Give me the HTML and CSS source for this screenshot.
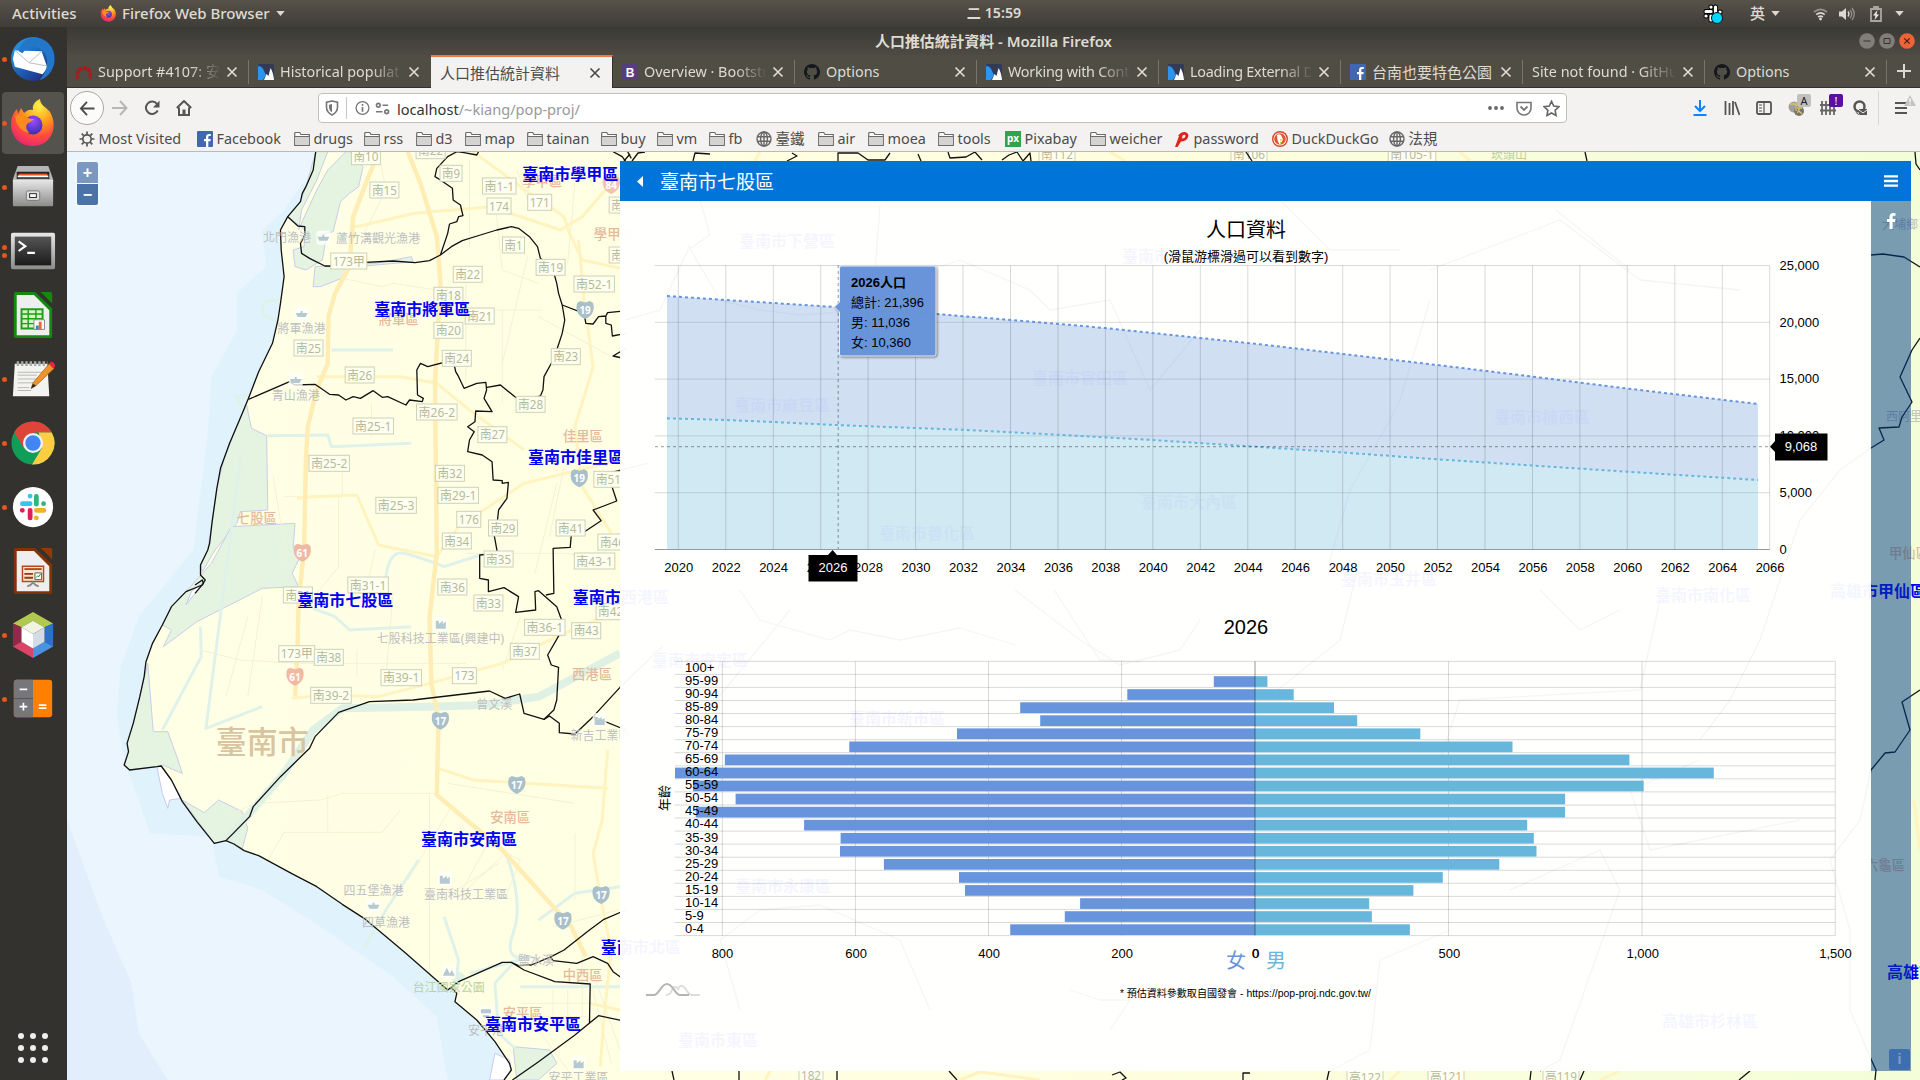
FILE: index.html
```html
<!DOCTYPE html>
<html lang="zh-Hant">
<head>
<meta charset="utf-8">
<title>人口推估統計資料</title>
<link rel="stylesheet" href="styles.css">
</head>
<body>
<svg class="defs" aria-hidden="true">
  <defs>
    <radialGradient id="ffBody" cx=".65" cy=".15" r="1"><stop offset="0" stop-color="#fff14a"/><stop offset=".35" stop-color="#ffa01c"/><stop offset=".65" stop-color="#ff4a3e"/><stop offset="1" stop-color="#e0158c"/></radialGradient>
    <radialGradient id="ffCore" cx=".5" cy=".3" r=".7"><stop offset="0" stop-color="#9a4cff"/><stop offset="1" stop-color="#3b2fa8"/></radialGradient>
    <linearGradient id="tbBody" x1="0" x2="1" y2="1"><stop offset="0" stop-color="#2aa5e8"/><stop offset=".5" stop-color="#1d60b8"/><stop offset="1" stop-color="#231a63"/></linearGradient>
    <linearGradient id="metal" x2="0" y2="1"><stop offset="0" stop-color="#e8e8e8"/><stop offset="1" stop-color="#8c8c8c"/></linearGradient>
    <linearGradient id="screen" x2="0" y2="1"><stop offset="0" stop-color="#555"/><stop offset="1" stop-color="#1b1b1b"/></linearGradient>
  </defs>
  <symbol id="firefox" viewBox="0 0 46 48"><path d="M23 47C10 47 1 38 1 25c0-7 3-12 6-15l1 5 3-6 3 5c3-3 6-4 9-3-1-5 2-9 7-11 0 6 6 8 10 13 9 15 1 34-17 34z" fill="url(#ffBody)"/><circle cx="23" cy="26" r="9.5" fill="url(#ffCore)"/><path d="M5 17c5-1 9-2 13 2 2 1 4 1 6 1-2 3-5 3-7 5-2 3 0 7 3 9-8-1-14-7-15-17z" fill="#ff8a1e"/></symbol>
  <symbol id="close" viewBox="0 0 12 12"><path d="M1.5 1.5l9 9M10.500 1.500l-9 9" stroke="currentColor" stroke-width="1.700" fill="none"/></symbol>
  <symbol id="folder" viewBox="0 0 16 16"><path d="M.7 14.300V2.500q0-1 1-1h4l1.200 2h8.400v10.800z" fill="#fff" stroke="#6a6a6a" stroke-width="1.200"/><path d="M1.300 5.800h13.400v7.900H1.300z" fill="#d4d3d1"/><path d="M.7 5.500h14.600" stroke="#6a6a6a"/></symbol>
  <symbol id="globe" viewBox="0 0 16 16"><g fill="none" stroke="#666" stroke-width="1.400"><circle cx="8" cy="8" r="7"/><ellipse cx="8" cy="8" rx="3.400" ry="7"/><path d="M1 5.700h14M1 10.300h14M8 1v14"/></g></symbol>
  <symbol id="fb" viewBox="0 0 16 16"><rect width="16" height="16" rx="1" fill="#4267b2"/><path d="M9 16v-5.700H7V8h2V6.200C9 4 10.300 3 12 3h1.800v2h-1.300c-1 0-1.200.5-1.200 1.300V8h2.400l-.3 2.300h-2.100V16z" fill="#fff"/></symbol>
  <symbol id="github" viewBox="0 0 16 16"><path fill="#15181b" d="M8 0C3.580 0 0 3.580 0 8c0 3.540 2.290 6.530 5.470 7.590.4.070.55-.17.55-.38v-1.490c-2.010.37-2.530-.49-2.690-.94-.09-.23-.48-.94-.82-1.130-.28-.15-.68-.52-.01-.53.63-.01 1.080.58 1.230.82.72 1.210 1.870.87 2.330.66.07-.52.28-.87.51-1.070-1.780-.2-3.640-.89-3.640-3.950 0-.87.31-1.590.82-2.150-.08-.2-.36-1.020.08-2.120 0 0 .67-.21 2.200.82a7.400 7.400 0 0 1 4 0c1.530-1.040 2.200-.82 2.200-.82.44 1.100.16 1.920.08 2.120.51.560.82 1.270.82 2.150 0 3.070-1.870 3.750-3.650 3.950.29.25.54.73.54 1.480v2.200c0 .21.15.46.55.38A8 8 0 0 0 8 0z"/></symbol>
  <symbol id="arcgis" viewBox="0 0 16 16"><rect width="16" height="16" rx="1" fill="#343a55"/><path d="M0 2c5 0 6 5 8 9l-3 5H0z" fill="#2a94ee"/><path d="M6 16l2.500-6 2 2 2-8c2 3 3 7 3.500 12z" fill="#fff"/></symbol>
  <symbol id="redmine" viewBox="0 0 16 16"><path d="M1.500 14.500C.8 7 4 4 8 4s7.200 3 6.500 10.500" fill="none" stroke="#b8121b" stroke-width="3.600" stroke-dasharray="3.600 .8"/></symbol>
  <symbol id="slack" viewBox="0 0 28 28"><g stroke-width="5" stroke-linecap="round"><path d="M11 2.600h-.1M3 10.500h8" stroke="#36c5f0"/><path d="M17.500 3v8M25 10.500h.1" stroke="#2eb67d"/><path d="M17.500 25.500v-.1M17.500 17.500h8" stroke="#ecb22e"/><path d="M2.800 17.500h.1M11 17.500v8" stroke="#e01e5a"/></g></symbol>
  <symbol id="caret" viewBox="0 0 10 6"><path d="M0 0h10L5 6z" fill="#dcd9d3"/></symbol>
</svg>

<header class="topbar">
  <div class="topbar-left">
    <span>Activities</span>
    <svg class="ff-mini"><use href="#firefox"/></svg><span>Firefox Web Browser</span><svg class="caret"><use href="#caret"/></svg>
  </div>
  <div class="clock">二 15:59</div>
  <div class="topbar-right">
    <svg class="tray-slack" viewBox="0 0 20 20"><g stroke="#000" stroke-width="5" stroke-linecap="round"><path d="M8 3v.1M3 7.500h5M12.500 3v5M17 8v.1M3 12h.1M8 12v4"/></g><g stroke="#fff" stroke-width="3.200" stroke-linecap="round"><path d="M8 3v.1M3 7.500h5M12.500 3v5M17 8v.1M3 12h.1M8 12v4"/></g><circle cx="14" cy="14" r="5.500" fill="#00d5ff" stroke="#111"/></svg>
    <span class="ime">英</span><svg class="caret caret-ime"><use href="#caret"/></svg>
    <svg class="tray-wifi" viewBox="0 0 16 14"><g fill="none" stroke="#dcd9d3" stroke-width="1.800"><path d="M1 5q7-6 14 0" opacity=".5"/><path d="M3.500 7.700q4.500-4 9 0M5.500 10.200q2.500-2 5 0"/></g><circle cx="8" cy="12.300" r="1.500" fill="#dcd9d3"/></svg>
    <svg class="tray-vol" viewBox="0 0 16 14"><path d="M0 4.500h3L7 1v12L3 9.500H0z" fill="#dcd9d3"/><g fill="none" stroke="#dcd9d3" stroke-width="1.300"><path d="M9 4.500q2 2.500 0 5"/><path d="M11 2.800q3.500 4.200 0 8.400M13 1q4.500 6 0 12" opacity=".5"/></g></svg>
    <svg class="tray-bat" viewBox="0 0 12 16"><path d="M1 3h10v12H1zM4 1h4v2H4z" fill="none" stroke="#a9a69f" stroke-width="1.800"/><path d="M7.500 4L3 9.500h2.500L4.500 14 9 8.500H6.500z" fill="#eee"/></svg>
    <svg class="caret"><use href="#caret"/></svg>
  </div>
</header>

<div class="desktop">
  <nav class="dock">
    <div class="dock-item run"><svg viewBox="0 0 48 48"><circle cx="24" cy="24" r="23" fill="url(#tbBody)"/><path d="M5 15l28 1 6 17-5 7-29-8-2-8z" fill="#fff"/><path d="M5 15l15 13 13-12M20 28l18 3" fill="none" stroke="#bbb"/><path d="M9 16C12 5 20 0 30 2c12 3 18 14 16 27-2 9-8 15-15 17 8-9 10-20 5-28C29 9 20 8 13 18z" fill="#2277c8"/></svg></div>
    <div class="dock-item run active"><svg><use href="#firefox"/></svg></div>
    <div class="dock-item run"><svg viewBox="0 0 48 48"><path d="M8 2h32l5 14H3z" fill="#b5b5b5"/><path d="M7 8h34v9H7z" fill="#222"/><path d="M9 10h30v3H9z" fill="#e95420"/><path d="M8 12h32v2H8z" fill="#fff"/><path d="M8 14h32v3H8z" fill="#444"/><rect x="3" y="16" width="42" height="28" rx="1" fill="url(#metal)"/><rect x="17" y="28" width="14" height="10" rx="2" fill="#ddd" stroke="#777"/><path d="M20 33h8" stroke="#222" stroke-width="5"/><path d="M21 33h6" stroke="#fff" stroke-width="3"/></svg></div>
    <div class="dock-item run two"><svg viewBox="0 0 48 48"><rect x="1" y="5" width="46" height="38" rx="2" fill="url(#metal)"/><rect x="5" y="9" width="38" height="30" fill="url(#screen)"/><path d="M9 14l7 5-7 5M18 26h8" fill="none" stroke="#fff" stroke-width="2.200"/></svg></div>
    <div class="dock-item"><svg viewBox="0 0 48 48"><path d="M4 2q0-2 2-2h20l18 17v29q0 2-2 2H6q-2 0-2-2z" fill="#128a10"/><path d="M32 0h10q2 0 2 2v10z" fill="#128a10"/><path d="M7 3h18l16 16v26H7z" fill="#eee"/><path d="M12 18h22v20H12z" fill="#d8f5c8" stroke="#1aa014" stroke-width="2"/><path d="M12 23h22M12 28h22M12 33h22M19 18v20M27 18v20" stroke="#1aa014" stroke-width="1.500"/><path d="M25 29h11v10H25z" fill="#fff" stroke="#888"/><path d="M27 39v-4h3v4z" fill="#28c"/><path d="M30 39v-8h3v8z" fill="#e63"/></svg></div>
    <div class="dock-item run"><svg viewBox="0 0 48 48"><path d="M5 8h34l2 34H3z" fill="#f3f3ef"/><path d="M7 8h32" stroke="#aaa" stroke-width="5" stroke-dasharray="2.500 2"/><path d="M8 17h26M8 20h20M8 24h24M8 28h18M8 33h12M8 36h14" stroke="#b5b5b5"/><path d="M41 8l5 5-19 18-5 3 2-6z" fill="#f0932b" stroke="#a0591a" stroke-width=".7"/><path d="M41 8l2-2q4 0 4 5l-2 2z" fill="#e24"/><path d="M22 34l2-5 3 2z" fill="#222"/></svg></div>
    <div class="dock-item run"><svg viewBox="0 0 48 48"><circle cx="24" cy="24" r="22.500" fill="#109d58"/><path d="M4.500 12.800A22.500 22.500 0 0 1 43.500 13H24l-9.500 16.500z" fill="#de4437"/><path d="M43.500 13A22.500 22.500 0 0 1 23 46.500L33.500 29 30 13z" fill="#ffcd42"/><circle cx="24" cy="24" r="10.500" fill="#f1f1f1"/><circle cx="24" cy="24" r="8" fill="#4285f4"/></svg></div>
    <div class="dock-item run"><svg viewBox="0 0 48 48"><circle cx="24" cy="24" r="21" fill="#fff"/><use href="#slack" x="10" y="10" width="28" height="28"/></svg></div>
    <div class="dock-item"><svg viewBox="0 0 48 48"><path d="M4 2q0-2 2-2h20l18 17v29q0 2-2 2H6q-2 0-2-2z" fill="#843106"/><path d="M32 0h10q2 0 2 2v10z" fill="#943a08"/><path d="M7 3h18l16 16v26H7z" fill="#eee"/><path d="M13 19h22v16H13z" fill="#fbe5d4" stroke="#b5491c" stroke-width="1.500"/><path d="M15 22h18" stroke="#b5491c" stroke-width="2"/><path d="M15 27h9M15 31h9" stroke="#943a08" stroke-width="2"/><path d="M26 26h7v7h-7z" fill="#fff" stroke="#555"/><path d="M27 31l2-2 1 1 2-3" stroke="#184" fill="none"/><path d="M18 40q4-1 6-4 2 3 6 4" stroke="#888" stroke-width="2" fill="none"/></svg></div>
    <div class="dock-item run"><svg viewBox="0 0 48 48"><path d="M24 0l21 12-9 4-12-7-12 7-9-4z" fill="#b1c94f"/><path d="M3 12l9 4v15l-9 5z" fill="#93294a"/><path d="M45 12l-9 4v15l9 5z" fill="#2f70c4"/><path d="M3 36l9-5 12 7v10z" fill="#dc4467"/><path d="M45 36l-9-5-12 7v10z" fill="#4a93e0"/><path d="M24 9l12 7-12 7-12-7z" fill="#f0f3e0"/><path d="M12 16l12 7v15l-12-7z" fill="#fff"/><path d="M36 16l-12 7v15l12-7z" fill="#d3dbe5"/></svg></div>
    <div class="dock-item run"><svg viewBox="0 0 48 48"><rect x="4" y="4" width="40" height="39" rx="3" fill="#ff7f00"/><path d="M7 4h17v39H7q-3 0-3-3V7q0-3 3-3z" fill="#77767b"/><path d="M4 23.500h20" stroke="#55545a"/><path d="M10 14h8M10 32h8M14 28v8M30 30.500h8M30 33.500h8" stroke="#fff" stroke-width="1.800"/></svg></div>
    <div class="apps"><i></i><i></i><i></i><i></i><i></i><i></i><i></i><i></i><i></i></div>
  </nav>

  <main class="window">
    <div class="titlebar"><span class="win-title">人口推估統計資料 - Mozilla Firefox</span>
      <div class="win-buttons">
        <svg viewBox="0 0 16 16"><circle cx="8" cy="8" r="7.800" fill="#807e77"/><path d="M4.500 8h7" stroke="#33322e"/></svg>
        <svg viewBox="0 0 16 16"><circle cx="8" cy="8" r="7.800" fill="#807e77"/><path d="M5 5.500h6v5H5z" fill="none" stroke="#33322e"/></svg>
        <svg viewBox="0 0 16 16"><circle cx="8" cy="8" r="7.800" fill="#ee6338"/><path d="M5.300 5.300l5.400 5.400M10.700 5.300l-5.400 5.400" stroke="#43200f" stroke-width="1.200"/></svg>
      </div>
    </div>
    <div class="tabs">
      <div class="tab"><svg class="fav"><use href="#redmine"/></svg><span class="fade">Support #4107: 安</span><svg class="x"><use href="#close"/></svg></div>
      <div class="tab"><svg class="fav"><use href="#arcgis"/></svg><span class="fade">Historical populat</span><svg class="x"><use href="#close"/></svg></div>
      <div class="tab current"><span class="cjk">人口推估統計資料</span><svg class="x"><use href="#close"/></svg></div>
      <div class="tab"><svg class="fav" viewBox="0 0 16 16"><rect width="16" height="16" rx="2" fill="#563d7c"/><text x="8" y="12.500" text-anchor="middle" class="fav-b">B</text></svg><span class="fade">Overview · Bootstr</span><svg class="x"><use href="#close"/></svg></div>
      <div class="tab"><svg class="fav"><use href="#github"/></svg><span>Options</span><svg class="x"><use href="#close"/></svg></div>
      <div class="tab"><svg class="fav"><use href="#arcgis"/></svg><span class="fade tight">Working with Cont</span><svg class="x"><use href="#close"/></svg></div>
      <div class="tab"><svg class="fav"><use href="#arcgis"/></svg><span class="fade tight">Loading External D</span><svg class="x"><use href="#close"/></svg></div>
      <div class="tab"><svg class="fav"><use href="#fb"/></svg><span class="cjk">台南也要特色公園</span><svg class="x"><use href="#close"/></svg></div>
      <div class="tab"><span class="fade">Site not found · GitHu</span><svg class="x"><use href="#close"/></svg></div>
      <div class="tab"><svg class="fav"><use href="#github"/></svg><span>Options</span><svg class="x"><use href="#close"/></svg></div>
      <svg class="newtab" viewBox="0 0 14 14"><path d="M7 0v14M0 7h14" stroke="#dcd9d3" stroke-width="2"/></svg>
    </div>
    <div class="navbar">
      <div class="nav-left">
        <div class="back"><svg viewBox="0 0 16 16"><path d="M8 1L1.500 8 8 15M1.500 8H16" fill="none" stroke="#4c4c4c" stroke-width="2"/></svg></div>
        <svg viewBox="0 0 16 16"><path d="M8 1l6.500 7L8 15M14.500 8H0" fill="none" stroke="#b7b6b4" stroke-width="2"/></svg>
        <svg viewBox="0 0 16 16"><path d="M13.700 10.500A6.200 6.200 0 1 1 13 4" fill="none" stroke="#555" stroke-width="2"/><path d="M15.500.5v7H9z" fill="#555"/></svg>
        <svg viewBox="0 0 16 16"><path d="M.8 8L8 1l7.200 7M3 7.500V15h10V7.500" fill="none" stroke="#555" stroke-width="2"/><path d="M6.500 9.500h3V15h-3z" fill="#555"/></svg>
      </div>
      <div class="urlbar">
        <svg class="shield" viewBox="0 0 14 16"><path d="M7 1l5.500 1.200v5q0 5-5.500 7.800-5.500-2.800-5.500-7.800v-5z" fill="none" stroke="#777" stroke-width="1.600"/><path d="M7 4l-3 .7V8q.5 3 3 4.300z" fill="#777"/></svg>
        <svg class="ident" viewBox="0 0 16 16"><circle cx="8" cy="8" r="6.800" fill="none" stroke="#777" stroke-width="1.400"/><path d="M8 7v5M8 3.800v1.800" stroke="#777" stroke-width="1.800"/></svg>
        <svg class="perm" viewBox="0 0 16 14"><g fill="none" stroke="#777" stroke-width="1.800"><circle cx="3.500" cy="3.500" r="2"/><circle cx="12.500" cy="10.500" r="2"/><path d="M8 3.500h6M1 10.500h7"/></g></svg>
        <span class="url">localhost<em>/~kiang/pop-proj/</em></span>
        <svg class="dots" viewBox="0 0 16 4"><g fill="#666"><circle cx="2" cy="2" r="1.900"/><circle cx="8" cy="2" r="1.900"/><circle cx="14" cy="2" r="1.900"/></g></svg>
        <svg class="pocket" viewBox="0 0 16 15"><path d="M1 1.500h14V7A7 7 0 0 1 1 7z" fill="none" stroke="#777" stroke-width="1.600"/><path d="M4.500 5.500L8 9l3.500-3.500" fill="none" stroke="#777" stroke-width="1.800"/></svg>
        <svg class="star" viewBox="0 0 16 16"><path d="M8 1.200l2.100 4.500 4.900.6-3.600 3.400.9 4.900L8 12.200l-4.300 2.400.9-4.900L1 6.300l4.900-.6z" fill="none" stroke="#666" stroke-width="1.500"/></svg>
      </div>
      <div class="nav-right">
        <svg viewBox="0 0 16 16"><path d="M8 0v10M3 6l5 5 5-5M1.500 15h13" fill="none" stroke="#0a84ff" stroke-width="2"/></svg>
        <svg viewBox="0 0 16 16"><path d="M1.500 1v14M5.500 3v12M9 1v14M11 2l4.500 13" fill="none" stroke="#555" stroke-width="1.800"/></svg>
        <svg viewBox="0 0 16 16"><rect x="1" y="2" width="14" height="12" rx="1.500" fill="none" stroke="#555" stroke-width="1.800"/><path d="M8 2v12M3 5h3M3 8h3M3 11h3" stroke="#555" stroke-width="1.200"/></svg>
        <div class="ext"><svg viewBox="0 0 16 16"><circle cx="6" cy="7" r="5.500" fill="#a3a099"/><circle cx="11" cy="11" r="5" fill="#77746d"/><path d="M2 4h6v7M9 8h5M11.500 8l-2 5M10 10l4 4" stroke="#d9c36c" fill="none" stroke-width="1.300"/></svg><b>A</b></div>
        <div class="ext purple"><svg viewBox="0 0 16 16"><path d="M2 1v14M6 1v14M10 1v14M14 1v14M0 5h16M0 10.500h16" stroke="#666" stroke-width="1.800"/></svg><b>!</b></div>
        <svg viewBox="0 0 16 16"><circle cx="7.500" cy="6.500" r="5" fill="none" stroke="#555" stroke-width="2.500"/><path d="M3 11q2 4 5 4M7 9h8v6H7z" fill="#555"/><path d="M7 10l4 3 4-3" stroke="#f4f2f0" fill="none"/></svg>
        <i class="nav-sep"></i>
        <div class="ext menu"><svg viewBox="0 0 16 16"><path d="M2 3h12M2 8h12M2 13h12" stroke="#555" stroke-width="2"/></svg><svg class="warn" viewBox="0 0 14 13"><path d="M7 0l7 13H0z" fill="#c4c3c1"/><path d="M7 4v4.500M7 10v1.500" stroke="#fff" stroke-width="1.500"/></svg></div>
      </div>
    </div>
    <div class="bookmarks">
      <a><svg viewBox="0 0 16 16"><circle cx="8" cy="8" r="4.200" fill="none" stroke="#555" stroke-width="1.700"/><path d="M8 .5v3M8 12.500v3M.5 8h3M12.500 8h3M2.700 2.700l2 2M11.300 11.300l2 2M13.300 2.700l-2 2M4.700 11.300l-2 2" stroke="#555" stroke-width="1.700"/></svg>Most Visited</a>
      <a><svg><use href="#fb"/></svg>Facebook</a>
      <a><svg><use href="#folder"/></svg>drugs</a>
      <a><svg><use href="#folder"/></svg>rss</a>
      <a><svg><use href="#folder"/></svg>d3</a>
      <a><svg><use href="#folder"/></svg>map</a>
      <a><svg><use href="#folder"/></svg>tainan</a>
      <a><svg><use href="#folder"/></svg>buy</a>
      <a><svg><use href="#folder"/></svg>vm</a>
      <a><svg><use href="#folder"/></svg>fb</a>
      <a><svg><use href="#globe"/></svg>臺鐵</a>
      <a><svg><use href="#folder"/></svg>air</a>
      <a><svg><use href="#folder"/></svg>moea</a>
      <a><svg><use href="#folder"/></svg>tools</a>
      <a><svg viewBox="0 0 16 16"><rect width="16" height="16" fill="#2ea44f"/><text x="8" y="11" text-anchor="middle" class="fav-px">px</text></svg>Pixabay</a>
      <a><svg><use href="#folder"/></svg>weicher</a>
      <a><svg viewBox="0 0 16 16"><path d="M4 5q3-4.500 7-4 4.500 1 3 5.500-2 4-7 4L3.500 16H1l4-11zM8 7.500q3 0 3.500-2.500-.5-2-3-.5z" fill="#e0241b" fill-rule="evenodd"/></svg>password</a>
      <a><svg viewBox="0 0 16 16"><circle cx="8" cy="8" r="7.300" fill="#fff" stroke="#d9432a" stroke-width="1.400"/><circle cx="8" cy="8" r="5.800" fill="#de5833"/><path d="M5 4q4-2 5 2l1 3q-2 3-3 5-3-4-3-10z" fill="#fff"/><path d="M8 8l4 .5-3.500 1.500z" fill="#fc0"/><path d="M8 11l3 1-2 1z" fill="#4a4"/></svg>DuckDuckGo</a>
      <a><svg><use href="#globe"/></svg>法規</a>
    </div>

    <section class="content">
      <svg id="map" class="map" viewBox="67 152 1853 928"></svg>
      <div class="zoom-ctl"><button class="hover">+</button><button>−</button></div>
      <div class="info-btn">i</div>
      <aside class="sidebar">
        <header class="side-head">
          <svg class="back-caret" viewBox="0 0 6 11"><path d="M6 0v11L0 5.500z" fill="#fff"/></svg>
          <h1>臺南市七股區</h1>
          <svg class="burger" viewBox="0 0 14 12"><path d="M0 1.300h14M0 6h14M0 10.700h14" stroke="#fff" stroke-width="2.300"/></svg>
        </header>
        <div class="side-body">
          <svg id="charts" class="charts" viewBox="620 201 1251 870"></svg>
          <div class="rail"><svg viewBox="0 0 9 16"><path d="M2.500 16V9H0V6h2.500V4c0-2.600 1.500-4 3.800-4L8.500.2v2.500H7.200C6 2.700 5.600 3.300 5.600 4.100V6h2.800L8 9H5.600v7z" fill="#fff"/></svg></div>
        </div>
      </aside>
    </section>
  </main>
</div>
<script src="script.js"></script>
</body>
</html>
```
FILE: styles.css
```css
* { box-sizing: border-box; }
body { margin: 0; width: 1920px; height: 1080px; overflow: hidden; font: 14.67px/1 "Noto Sans", "Noto Sans CJK TC", sans-serif; color: #4c4c4c; background: #33322e; }
svg { display: block; flex: none; }
.defs { position: absolute; width: 0; height: 0; }

.topbar { height: 27px; display: grid; grid-template-columns: 1fr auto 1fr; align-items: center; background: linear-gradient(#575249, #3f3d38); color: #dfdbd2; font-weight: 500; font-size: 15px; }
.topbar-left { display: flex; align-items: center; padding-left: 12px; }
.topbar-left span:first-child { width: 69px; white-space: nowrap; }
.topbar-left span:nth-of-type(2) { width: 148px; white-space: nowrap; }
.ff-mini { width: 17px; height: 17px; margin: 0 5px 0 19px; }
.caret { width: 9px; height: 5px; margin-left: 6px; }
.clock { padding-left: 68px; font-size: 14.2px; font-weight: 600; }
.topbar-right { display: flex; align-items: center; justify-content: flex-end; padding-right: 16px; }
.tray-slack { width: 20px; height: 20px; margin-right: 27px; }
.ime { margin-right: 0; font-weight: 500; }
.caret-ime { margin-right: 33px; }
.tray-wifi { width: 15px; height: 14px; margin-right: 11px; }
.tray-vol { width: 16px; height: 14px; margin-right: 15px; }
.tray-bat { width: 12px; height: 16px; margin-right: 7px; }

.desktop { display: flex; height: 1053px; }
.dock { width: 67px; padding-right: 1px; display: flex; flex-direction: column; align-items: center; background: #33322e; }
.dock-item { position: relative; width: 62px; height: 62px; margin: 1px 0; display: grid; place-items: center; border-radius: 4px; }
.dock-item.active { background: #55534e; }
.dock-item svg { width: 46px; height: 48px; }
.dock-item.run::before { content: ""; position: absolute; left: 0; top: 29px; width: 5px; height: 5px; border-radius: 50%; background: #e95420; }
.dock-item.two::before { top: 25px; box-shadow: 0 8px #e95420; }
.apps { display: grid; grid-template-columns: repeat(3, 6px); gap: 6px; margin: auto 0 17px; }
.apps i { width: 6px; height: 6px; border-radius: 50%; background: #eee; }

.window { flex: 1; min-width: 0; display: flex; flex-direction: column; background: #f4f2f0; }
.titlebar { height: 28px; display: flex; align-items: center; position: relative; justify-content: center; background: linear-gradient(#3a3934, #4e4b44); color: #dfdbd2; font-weight: 600; font-size: 14.9px; }
.win-buttons { position: absolute; right: 5px; top: 6px; display: flex; gap: 4px; }
.win-buttons svg { width: 16px; height: 16px; }

.tabs { height: 33px; display: flex; background: #504d45; border-bottom: 1px solid #33322e; color: #dfdbd2; font-size: 14.4px; }
.tab { width: 182px; display: flex; align-items: center; padding: 2px 11px 0 9px; position: relative; }
.tab:not(.current)::after { content: ""; position: absolute; right: 0; top: 5px; height: 24px; width: 1px; background: #77746c; }
.tab:nth-child(2)::after { opacity: 0; }
.tab span { flex: 1; min-width: 0; white-space: nowrap; overflow: hidden; line-height: 22px; }
.tab .cjk { font-size: 15px; }
.tab .tight { letter-spacing: -.25px; }
.fade { -webkit-mask: linear-gradient(90deg, #000 75%, transparent 102%); mask: linear-gradient(90deg, #000 75%, transparent 102%); }
.fav { width: 16px; height: 16px; margin-right: 6px; }
.fav-b { font: bold 12px "Liberation Sans", sans-serif; fill: #fff; }
.fav-px { font: bold 10px "Noto Sans", sans-serif; fill: #fff; }
.x { width: 12px; height: 12px; margin-left: 7px; }
.current { background: #f4f2f0; color: #4c4c4c; height: 33px; border-top: 2px solid #f07746; padding-top: 0; border-right: 1px solid #33322e; }
.newtab { width: 14px; height: 14px; margin: 9px 0 0 10px; }

.navbar { height: 40px; display: flex; align-items: center; }
.nav-left { width: 251px; padding-left: 3px; display: flex; align-items: center; gap: 16px; }
.nav-left > svg { width: 16px; height: 16px; }
.back { width: 34px; height: 34px; border: 1px solid #aaa8a5; border-radius: 50%; background: #fbfbfa; display: grid; place-items: center; margin-right: -8px; }
.back svg { width: 16px; height: 15px; }
.urlbar { width: 1249px; height: 30px; display: flex; align-items: center; background: #fff; border: 1px solid #c3c0bc; border-radius: 4px; padding: 0 6px; }
.shield { width: 14px; height: 16px; margin-right: 7px; }
.ident { width: 24px; height: 22px; padding: 3px 0 3px 8px; border-left: 1px solid #c8c8c8; margin-right: 5px; }
.perm { width: 15px; height: 13px; margin-right: 7px; }
.url { flex: 1; color: #333; font-size: 14.6px; line-height: 22px; padding-top: 1px; }
.url em { font-style: normal; color: #999; }
.dots { width: 16px; height: 4px; margin-right: 12px; }
.pocket { width: 16px; height: 15px; margin-right: 11px; }
.star { width: 17px; height: 17px; }
.nav-right { flex: 1; display: flex; align-items: center; gap: 16px; padding-left: 125px; }
.nav-right > svg, .ext > svg { width: 16px; height: 16px; }
.ext { position: relative; }
.ext.menu { margin-left: 3px; }
.ext b { position: absolute; left: 9px; top: -6px; width: 14px; height: 13px; border-radius: 2px; background: #c2c0bd; color: #222; font: 11px/13px "Noto Sans", sans-serif; text-align: center; }
.purple b { background: #5a0fa0; color: #fff; }
.nav-sep { width: 1px; height: 34px; background: #dad8d5; margin: 0 -5px 0 -6px; }
.ext .warn { position: absolute; left: 11px; top: -6px; width: 12px; height: 13px; }

.bookmarks { height: 24px; display: grid; grid-template-columns: 118px 97px 70px 52px 49px 62px 74px 56px 52px 47px 62px 50px 70px 67px 85px 84px 98px 117px 60px; padding-left: 12px; border-bottom: 1px solid #bdbab6; font-size: 14.4px; }
.bookmarks a { display: flex; align-items: center; gap: 3.500px; white-space: nowrap; padding-bottom: 1px; }
.bookmarks svg { width: 16px; height: 16px; }

.content { position: relative; flex: 1; overflow: hidden; }
.map { width: 1853px; height: 928px; }
.map text { text-anchor: middle; dominant-baseline: central; font-family: "Noto Sans", "Noto Sans CJK TC", sans-serif; }
.map .sea { fill: #eaf5fd; }
.map .shallow { fill: #e0f3fc; }
.map .deep { fill: #e2eefb; }
.map .green { fill: #e4f4e1; stroke: #c9cdea; stroke-width: 1; }
.map .sand { fill: #fff; stroke: #c5c9f5; stroke-width: 1; }
.map path { vector-effect: non-scaling-stroke; }
.map .water, .map .river, .map .road, .map .trunk, .map .lane, .map .border { fill: none; stroke-linejoin: round; }
.map .river { stroke: #dff1e4; stroke-width: 8; }
.map .water { stroke: #dff2ea; stroke-width: 3; }
.map .trunk { stroke: #ffedb4; stroke-width: 4.5; }
.map .road { stroke: #fff3bf; stroke-width: 3; }
.map .lane { stroke: #f3f2d2; stroke-width: 1; }
.map .border { stroke: #111; stroke-width: 1.3; }
.map .plate { fill: #fffff0; stroke: #ccd2b4; }
.map .code { font-size: 12.5px; fill: #b3bb9b; }
.map .town { font-size: 13.3px; fill: #e3bb9c; font-weight: 500; }
.map .poi { font-size: 12px; fill: #bdbfc3; }
.map .park { font-size: 12px; fill: #b9d2a0; }
.map .city { font-size: 31px; fill: #d8c4a0; font-weight: 500; }
.map .district { font-size: 16px; font-weight: 700; fill: #0000f5; }
.map .shield-no { font: bold 10px "Noto Sans", sans-serif; fill: #fff; }

.zoom-ctl { position: absolute; left: 8px; top: 8px; width: 25px; padding: 2px; border-radius: 4px; background: rgba(255,255,255,.4); display: grid; gap: 1px; }
.zoom-ctl button { height: 21px; border: 0; padding: 0; color: #fff; background: #4c73a8; font: bold 16px/18px "Liberation Sans", sans-serif; border-radius: 0 0 2px 2px; }
.zoom-ctl .hover { background: #7b98c0; border-radius: 2px 2px 0 0; }
.info-btn { position: absolute; right: 10px; bottom: 10px; width: 21px; height: 21px; border-radius: 2px; background: #7fa0d8; color: #fff; text-align: center; font: bold 14px/21px "Liberation Sans", sans-serif; }

.sidebar { position: absolute; left: 553px; top: 9px; width: 1291px; height: 910px; display: flex; flex-direction: column; }
.side-head { height: 40px; display: flex; align-items: center; background: #0074d9; color: #fff; padding: 0 13px 0 17px; }
.back-caret { width: 6px; height: 11px; }
.side-head h1 { flex: 1; margin: 0 0 0 17px; font: 400 19px/38px "Noto Sans CJK TC", sans-serif; }
.burger { width: 14px; height: 12px; }
.side-body { flex: 1; display: flex; }
.charts { width: 1251px; height: 870px; background: rgba(255,255,255,.96); font-family: "Liberation Sans", "Noto Sans CJK TC", sans-serif; font-size: 13px; }
.charts text { dominant-baseline: central; }
.charts .mid { text-anchor: middle; }
.charts .title { font-size: 20px; text-anchor: middle; }
.charts .note { font-size: 10px; }
.charts .inv { fill: #fff; text-anchor: middle; }
.charts .bold { font-weight: 700; }
.charts .grid { fill: none; stroke: #000; stroke-opacity: .15; }
.charts .axis { fill: none; stroke: #000; stroke-opacity: .4; }
.charts .cursor { fill: none; stroke: #000; stroke-opacity: .4; stroke-dasharray: 3 3; }
.charts .all-area { fill: #6794dc; fill-opacity: .3; }
.charts .male-area { fill: #67b7dc; fill-opacity: .3; }
.charts .all-line { fill: none; stroke: #6794dc; stroke-width: 2; stroke-dasharray: 3 3; }
.charts .male-line { fill: none; stroke: #67b7dc; stroke-width: 2; stroke-dasharray: 3 3; }
.charts .f { fill: #6794dc; }
.charts .m { fill: #67b7dc; }
.charts .tip { fill: #6794dc; fill-opacity: .97; stroke: #e8eefa; filter: drop-shadow(1px 1px 1px rgba(0,0,0,.45)); }
.rail { width: 40px; background: rgba(0,60,136,.5); display: flex; justify-content: center; padding-top: 12px; }
.rail svg { width: 9px; height: 16px; }
```
FILE: script.js
```js
const tag = (name, attrs, body = "") =>
  `<${name} ${Object.entries(attrs).map(([k, v]) => `${k}="${v}"`).join(" ")}>${body}</${name}>`;
const path = (cls, d) => tag("path", { class: cls, d });
const text = (cls, x, y, body) => tag("text", { class: cls, x, y }, body);

/* ---------- map ---------- */
const KX = 0.36352, KY = 1 / 3;
const px = (x) => +(66 + x * KX).toFixed(1);
const py = (y) => +(150 + y * KY).toFixed(1);

const coast = "687,5 680,60 660,110 650,130 645,155 610,200 590,240 592,300 600,380 590,460 583,510 568,580 530,665 502,745 485,790 450,880 435,925 425,955 415,1015 402,1115 395,1180 390,1200 370,1245 370,1275 383,1290 375,1305 330,1325 290,1370 265,1425 238,1480 220,1535 215,1580 203,1640 185,1720 168,1780 172,1805 160,1845 175,1860 250,1850 262,1848 290,1890 320,1955 360,2015 408,2080 440,2072 462,2082 490,2102 530,2117 620,2170 690,2210 760,2263 820,2305 930,2405 1050,2520 1060,2512 1075,2530 1070,2555 1130,2610 1180,2675 1220,2740 1225,2760 1205,2790";

const west = [
  path("shallow", "M650,100L600,180 540,240 550,350 470,430 470,540 400,680 390,850 350,1200 200,1400 150,1550 140,1700 165,1850 200,1950 230,2050 400,2060 420,2180 540,2220 700,2330 900,2480 1020,2600 1050,2790H1400V100z"),
  path("deep", "M0,2000L100,2300 180,2500 200,2650 280,2790H0z"),
  tag("path", { fill: "url(#land)", d: `M${coast} L5120,2790 5120,0z` }),
  path("green", "M687,5L780,5 817,50 805,110 780,130 755,155 745,200 735,245 700,255 715,270 705,330 660,360 630,350 625,300 655,290 657,240 610,200 645,155 660,110z"),
  path("green", "M685,350L850,340 950,320 955,335 780,352 770,380 700,410 680,410z"),
  tag("path", { fill: "#ffffe5", stroke: "#c9cdea", d: "M770,5L720,60 690,120 660,190 640,240 648,180 690,90 720,5z" }),
  path("green", "M497,765L510,835 552,857 555,1080 480,1085 470,1120 410,1200 375,1265 370,1245 390,1200 402,1115 415,1015 435,925 485,790z"),
  path("green", "M455,1130L630,1120 625,1190 640,1230 622,1270 640,1310 540,1315 360,1415 268,1490 290,1440 275,1430 265,1425 290,1370 330,1325 400,1240z"),
  path("green", "M225,1540L240,1745 280,1745 305,1820 320,1870 265,1845 250,1850 175,1860 160,1845 172,1805 168,1780 185,1720 203,1640z"),
  path("green", "M320,1950L380,1988 420,1950 485,1985 500,2035 485,2095 440,2072 408,2080z"),
  path("green", "M1240,2790L1230,2690 1330,2700 1350,2740 1300,2790z"),
  path("sand", "M250,1850L262,1848 290,1890 318,1945 285,1950 280,1975 265,1930z"),
  path("sand", "M1180,2710L1220,2730 1225,2760 1205,2790 1165,2790z"),
  path("sand", "M383,1290L355,1330 330,1365 345,1325z"),
  path("water", "M585,450L548,455 538,480 550,500 583,513M500,735L468,740 480,765 495,770M370,1430L372,1520 265,1740M680,1375L740,1400 780,1440 950,1430M880,1280Q890,1200 930,1210T1040,1250L1140,1215M480,925L385,1735 540,1670"),
  path("water", "M555,857L720,855 730,890 950,880M730,600H900M820,2395L880,2280 970,2130M1210,2110Q1260,2260 1230,2350T1280,2420L1110,2470M1070,2510L1080,2430 1040,2300M1230,2440L1180,2500 1190,2650 1240,2700M1250,2510H1524M1300,2310L1400,2230 1524,2210"),
  path("river", "M445,2070L505,1990 600,1870 680,1740 760,1675 1000,1670 1150,1665 1300,1640 1524,1510M1070,2500L1090,2470"),
  path("lane", "M600,1040H760V920M750,1040V1250L690,1330M840,860V760M830,1300L850,1200M640,1540H1100M540,1340L500,1640M370,1500L480,1530 640,1540M740,380L870,410 900,400 1020,420M860,10L880,120 820,250M1110,30V290M1180,150L1200,360 1300,400M1060,480H1310M1200,480V760M1100,400V700M1270,320L1200,640M570,980L610,1250M900,1330L880,1580M440,2000L520,1960 700,1950 760,1930H1020M550,2140L600,2047H870L920,1980M720,1935V2045M1000,1930V2480M940,2190L1060,1970M1080,2240L1160,2080 1250,2130 1210,2240M1100,2220L1200,2120M1060,2230L1190,2140M1350,1000L1290,1270M1370,950L1330,1160M1100,1210H1380L1500,1240M1250,1400L1200,1560M1400,100L1380,340M1240,60L1280,180M1300,500L1500,620M800,1500V1580M500,1400L440,1640M1050,1900L1400,1960M1420,2400V2600M1340,2520V2600M1380,2520V2620M1250,2560H1440M1260,2600H1430M1460,2500L1524,2700M1340,2330L1520,2280M1400,2050V2250M1440,2480L1500,2740M1300,2640L1400,2790"),
  path("road", "M620,1645L720,1635 860,1640 1000,1600 1200,1540 1350,1460 1524,1380M780,235L960,190 1170,170 1360,240 1420,200 1524,70M1120,5L1250,110 1370,200 1385,250 1420,330 1524,355M635,1045L680,1040 800,1035 860,1185 1020,1220 1080,1130 1260,1000 1524,930M1410,270L1425,450 1450,650 1400,830 1420,1010 1500,1150M1025,1855L1120,1890 1490,1915M1490,1800L1475,2010 1450,2110 1470,2240 1500,2400 1480,2600 1470,2750M690,680H920L1020,700M1020,700L1110,780 1260,900M1440,2560L1524,2580"),
  path("trunk", "M860,5L825,100 790,200 780,350 740,430 722,500 720,640 690,720 665,830 660,930 655,1200 640,1350 637,1500 630,1640M940,5L975,100 1020,260 1030,400 1015,700 1020,1210 1000,1400 1005,1600 1020,1680 1025,1700 1020,1935 1200,2100 1390,2330 1430,2420"),
  path("border", "M" + coast),
  path("border", "M610,200L638,228 657,230 657,255 645,280 648,310 670,325 712,348 795,350 810,338 900,333 960,338 1000,332 1030,315 1060,290 1090,272 1140,255 1185,240 1225,230 1245,235 1275,260 1297,290 1305,325 1340,360 1350,400 1355,430 1365,465 1372,510 1365,550 1350,600 1340,630 1315,680 1312,720 1305,738 1290,742 1240,745 1195,705 1158,712"),
  path("border", "M1030,315L1050,250 1055,222 1075,215 1080,200 1092,197 1085,165 1065,150 1063,115 1030,90 1015,80 1020,55 1050,20 1075,5 1095,8 1130,15 1135,5M1505,5L1530,20 1540,35M1545,5L1555,25"),
  path("border", "M502,748L615,695 630,705 685,703 725,733 750,735 770,750 790,740 810,745 845,722 870,742 885,740 935,765 945,750 980,755 983,745 967,735 965,660 975,640 995,650 1065,630 1072,665 1080,680 1095,715 1130,700 1155,697 1157,720 1150,745 1172,785 1127,783 1125,815 1105,830 1123,845 1110,870 1105,905 1145,915 1172,935 1175,990 1200,992 1200,1000 1217,997 1213,1045 1190,1080 1187,1110 1177,1150 1187,1210 1138,1215 1138,1285 1162,1290 1162,1325 1205,1313 1245,1340 1237,1387 1292,1380 1290,1325 1300,1322 1350,1370 1370,1430 1325,1515 1335,1545 1355,1552 1350,1650 1342,1680 1315,1708 1260,1690 1248,1632 1208,1645 1165,1623 955,1650 835,1655 750,1687 685,1760 670,1795 590,1880 515,1970 505,2000 460,2050 440,2072"),
  path("border", "M1320,1335L1342,1330 1340,1195 1387,1192 1390,1155 1420,1150 1472,1112 1450,1080 1515,1053 1490,970 1600,940M1365,465L1425,490 1430,520 1450,522 1465,500 1485,498 1490,488 1524,484M1485,498V520L1500,525 1503,558 1540,550M1540,595L1505,618 1530,624M355,1330L378,1300 375,1290 355,1305"),
  path("border", "M1315,1708L1330,1698 1357,1720 1357,1748 1400,1752 1450,1700 1524,1612 1640,1490M1450,1700L1540,1740M1060,2512L1080,2495 1200,2437 1225,2437 1245,2447 1280,2445 1335,2420 1370,2400 1440,2340 1480,2308 1540,2280M1225,2437L1260,2460 1345,2495 1442,2502 1440,2620M1332,2420L1340,2432 1405,2440 1450,2420 1490,2440 1505,2465 1530,2485M1228,2790L1300,2735 1400,2655 1465,2597 1530,2612"),
].join("");

const eastBorders =
  "M624,161L630,154M632,161L638,153 645,152M693,161L695,153 710,154M787,161L797,156 792,153M838,161V153H858L868,160 885,160 890,153M918,154L921,161M948,152L950,158 966,157 975,152 982,160M1002,160L1009,155 1017,152 1023,161 1030,153 1031,161M1246,152L1252,161M1585,152L1587,161" +
  "M672,1071L674,1080M739,1071V1080M837,1071V1080M949,1071L957,1080M1112,1075L1120,1072 1126,1078 1122,1080M1243,1080V1073H1250M1329,1071L1327,1080M1531,1071L1530,1080M1584,1071L1580,1080M1750,1071L1739,1080" +
  "M1915,152L1916,164 1920,170M1871,255L1883,254 1904,257 1920,267M1920,338L1912,350 1900,377 1912,402 1902,417 1899,427 1879,428 1884,440 1871,448 1840,470 1800,520 1780,580 1760,640 1730,700 1700,740M1920,690L1902,702 1910,730 1895,752 1885,753 1871,770 1860,820 1830,860 1850,930 1850,1010 1871,1059 1876,1070 1875,1080" +
  "M688,245L720,300 760,310 800,315 870,310M700,200L710,235 688,250 660,310 625,320M880,205L875,270 900,280 960,260 1030,290 1050,310 1110,300 1150,390 1200,330M740,590L760,620 830,640 850,630 900,640 960,628 1015,645M1015,590L1080,640 1120,665 1180,650 1200,620M700,720L790,610M1054,590L1100,660 1140,662M740,1010L720,940 760,910 820,905 900,940 930,1010M1070,990L1100,1000 1130,1000 1110,1030M1280,200L1330,250 1400,250M1430,270L1560,220 1640,280 1740,290M1430,300L1400,400 1390,420 1350,490 1330,560M1556,210L1630,270M1360,560L1340,640 1265,700M1540,590L1580,630 1620,610M1660,600L1640,690 1460,700 1440,760M1700,760L1630,790 1650,850 1700,840 1800,820M1510,890L1600,850 1620,890 1560,1060 1540,1071M1450,930L1380,960 1370,1050 1330,1071";

const codes = [["南10",825,20],["南22",1003,2],["南9",1059,70],["南15",876,120],["南1-1",1192,108],["171",1303,157],["174",1191,168],["173甲",778,333],["南1",1231,285],["南19",1333,352],["南22",1105,373],["南52-1",1453,402],["南18",1052,436],["南21",1138,498],["南20",1052,541],["南25",667,594],["南24",1075,625],["南23",1375,620],["南26",808,675],["南28",1278,763],["南26-2",1020,786],["南25-1",845,828],["南27",1173,854],["南25-2",724,940],["南32",1056,970],["南29-1",1079,1036],["南25-3",908,1066],["176",1108,1108],["南29",1202,1134],["南41",1388,1134],["南34",1075,1173],["南46",1503,1176],["南35",1190,1227],["南43-1",1454,1233],["南31-1",831,1305],["南36",1063,1311],["南31",638,1335],["南33",1162,1359],["南42",1498,1385],["南36-1",1317,1432],["南43",1431,1442],["173甲",635,1511],["南37",1262,1504],["南38",723,1522],["173",1096,1577],["南39-1",922,1583],["南39-2",729,1636],["南51",1492,988],["南",1515,165],["南",1515,315]]
  .map(([s, x, y]) => [s, px(x), py(y)])
  .concat([["南112",1057,154],["南106",1249,154],["南105-1",1412,154],["182",811,1075],["高122",1365,1077],["高121",1446,1076],["高119",1561,1076]]);
const codeWidth = (s) => [...s].reduce((w, c) => w + (c > "\u2000" ? 12 : c === "-" ? 4.5 : 7), 3);
const plates = codes.map(([s, x, y]) => {
  const w = codeWidth(s);
  return tag("rect", { class: "plate", x: x - w / 2, y: y - 8, width: w, height: 16 }) +
    `<text class="code" x="${x}" y="${y}" textLength="${w - 4}" lengthAdjust="spacingAndGlyphs">${s}</text>`;
}).join("");

const places = [
  ["town","學甲區",1310,93],["town","學甲區",1507,253],["town","將軍區",915,508],["town","佳里區",1422,857],["town","七股區",525,1103],["town","西港區",1447,1571],["town","安南區",1222,2000],["town","中西區",1421,2474],["town","安平區",1256,2590],
  ["poi","北門漁港",608,263],["poi","蘆竹溝觀光漁港",858,265],["poi","將軍漁港",648,535],["poi","青山漁港",632,737],["poi","七股科技工業區(興建中)",1030,1466],["poi","曾文溪",1178,1662],["poi","新吉工業區",1470,1756],["poi","四五堡漁港",846,2220],["poi","臺南科技工業區",1100,2233],["poi","四草漁港",880,2317],["park","台江國家公園",1053,2512],["poi","安平港",1155,2640],["poi","安平工業區",1410,2782],["poi","鹽水溪",1293,2432],
  ["city","臺南市",540,1773],
].map(([c, s, x, y]) => text(c, px(x), py(y), s)).join("");

const districts = [["學甲",1387,73],["將軍",980,478],["佳里",1403,920],["七股",768,1350],["西港",1526,1341],["安南",1109,2068],["北",1581,2392],["安平",1285,2623]]
  .map(([s, x, y]) => [`臺南市${s}區`, px(x), py(y)])
  .concat([["下營",787,241],["六甲",1170,256],["官田",1080,378],["麻豆",782,405],["大內",1189,502],["善化",927,533],["楠西",1542,417],["玉井",1389,579],["南化",1703,595],["安定",700,660],["新市",897,718],["永康",783,886],["東",718,1040]].map(([s, x, y]) => [`臺南市${s}區`, x, y]))
  .concat([["高雄市甲仙區",1878,591],["高雄市杉林區",1710,1021],["高雄市桃源區",1935,972]])
  .map(([s, x, y]) => text("district", x, y, s)).join("");

const rightTowns = [["poi","大埔鄉",1900,224],["poi","西阿里關",1910,416],["town","甲仙區",1909,553],["town","六龜區",1885,865],["park","崁頭山",1509,154]]
  .map(([c, s, x, y]) => text(c, x, y, s)).join("");

const shields = [["61","#efb9a4",650,1208],["61","#efb9a4",630,1580],["19","#a9c0cb",1428,480],["19","#a9c0cb",1412,985],["17","#a9c0cb",1030,1712],["17","#a9c0cb",1240,1905],["17","#a9c0cb",1472,2235],["17","#a9c0cb",1367,2312],["84","#efc4b4",1500,105]]
  .map(([n, c, x, y]) => tag("g", { transform: `translate(${px(x)} ${py(y)})` },
    tag("path", { d: "M-8-7L-5-9 0-7.500 5-9 8-7Q11 4 0 9-11 4-8-7z", fill: c }) + text("shield-no", 0, 0, n))).join("");

const factory = "M-5 5V-3H-2V0L2-3V0L5-2V5z";
const ship = "M-6-1H-1V-3H1V-1H6L4 3H-4z";
const marks = [[factory,1031,1421],[factory,1042,2186],[factory,1410,2740],[factory,1468,1710],[ship,708,263],[ship,648,492],[ship,632,690],[ship,846,2267],["M-6 4L-2-4 1 2 3-2 6 4z",1053,2465],["M-5-4H5V0H-5zM-3 2H3V4H-3z",1155,2590]]
  .map(([d, x, y]) => tag("g", { transform: `translate(${px(x)} ${py(y)})` },
    tag("rect", { x: -7, y: -7, width: 14, height: 14, rx: 2, fill: "#fffffa", opacity: 0.8 }) + tag("path", { d, fill: "#b5cad0" }))).join("");

document.getElementById("map").innerHTML =
  `<defs><linearGradient id="land"><stop offset="0" stop-color="#ffffe6"/><stop offset=".5" stop-color="#fffee0"/><stop offset="1" stop-color="#f3fdd8"/></linearGradient></defs>` +
  tag("rect", { class: "sea", x: 67, y: 152, width: 1853, height: 928 }) +
  tag("g", { transform: `translate(66 150) scale(${KX} ${KY})` }, west) +
  path("road", "M760,152L755,161M1110,152L1125,161M1460,152L1470,161M770,1071L765,1080M960,1080L980,1072 1040,1080M1400,1071L1390,1080M1620,1071L1600,1080M1914,800L1920,850") +
  plates + shields + marks + places + rightTowns + path("border", eastBorders) + districts;

/* ---------- area chart ---------- */
const TOP = 265.5, BOTTOM = 549.5, LEFT = 654.7, RIGHT = 1769.7;
const yearX = (y) => RIGHT - (2066 - y) / 2 * 47.45;
const total = "667,296 726,300 773,303 835,307 937,314 1035,322 1105,328 1200,338 1260,344.3 1343,354 1437,365 1532,376.5 1627,388.5 1758,404";
const male = "667,418.3 726,420 773,422 835,425 963,429.8 1058,434.7 1152,440 1256,446.7 1343,452.5 1437,459.3 1532,465.5 1627,471.7 1758,480";
const out = [];

for (let i = 0; i <= 5; i++) {
  const y = BOTTOM - i * 56.8;
  out.push(path(i ? "grid" : "axis", `M${LEFT},${y}H${RIGHT}`));
  out.push(text("", 1779.5, y - 0.3, (i * 5000).toLocaleString("en-US")));
}
out.push(path("all-area", `M${total} L${male.split(" ").reverse().join(" ")}z`));
out.push(path("male-area", `M${male} L1758,${BOTTOM} 667,${BOTTOM}z`));
for (let year = 2020; year <= 2066; year += 2) {
  const x = yearX(year);
  out.push(path("grid", `M${x.toFixed(1)},${TOP}V${BOTTOM}`));
  out.push(text("mid", (x + 0.4).toFixed(1), 567.2, year));
}
out.push(path("all-line", "M" + total), path("male-line", "M" + male));
out.push(path("cursor", "M838.2,265V549M655,446.700H1770"));
out.push(text("title", 1246, 230, "人口資料"), text("mid", 1246, 256, "(滑鼠游標滑過可以看到數字)"));
out.push(path("", "M1770,446.700L1775,441V433.500H1827.500V460.500H1775V452z"), text("inv", 1801, 446.5, "9,068"));
out.push(path("", "M832.600,550L837,555H857.500V581.500H808.500V555H828z"), text("inv", 833, 567.2, "2026"));
out.push(path("tip", "M839.500,268q0-2 2-2H934q2 0 2 2V354q0 2-2 2H841.500q-2 0-2-2V312L834.500,307 839.500,302z"));
[["bold", "2026人口"], ["", "總計: 21,396"], ["", "男: 11,036"], ["", "女: 10,360"]]
  .forEach(([c, s], i) => out.push(text(c, 851, 282.3 + i * 20.1, s)));

/* ---------- population pyramid ---------- */
const ages = ["100+","95-99","90-94","85-89","80-84","75-79","70-74","65-69","60-64","55-59","50-54","45-49","40-44","35-39","30-34","25-29","20-24","15-19","10-14","5-9","0-4"];
const women = [0,62,192,353,323,448,610,797,872,845,781,841,678,623,624,558,445,436,263,286,368];
const men = [0,32,100,204,264,427,665,967,1185,1004,801,801,703,720,727,631,485,409,295,302,400];
const ZERO = 1255, ROW = 13.06, Y0 = 661.3;
const yEnd = Y0 + ROW * 21;
let lines = "";
for (let i = 0; i <= 21; i++) lines += `M674.700,${(Y0 + i * ROW).toFixed(1)}H1835.300`;
[722.4, 855.4, 988.5, 1121.5, 1448.5, 1642, 1835.3].forEach((x) => { lines += `M${x},${Y0}V${yEnd.toFixed(1)}`; });
out.push(path("grid", lines));
ages.forEach((age, i) => {
  const y = (Y0 + i * ROW + 1.8).toFixed(1);
  const wf = women[i] * 0.6651, wm = men[i] * 0.3872;
  if (women[i]) {
    out.push(tag("rect", { class: "f", x: (ZERO - wf).toFixed(1), y, width: wf.toFixed(1), height: 10.7 }));
    out.push(tag("rect", { class: "m", x: ZERO, y, width: wm.toFixed(1), height: 10.7 }));
  }
  out.push(text("", 685, (Y0 + (i + 0.5) * ROW - 0.6).toFixed(1), age));
});
out.push(path("axis", `M${ZERO},${Y0}V${yEnd}`));
[["800",722.5],["600",856.2],["400",989.2],["200",1122.2],["0",1255.3],["0",1255.8],["500",1449.3],["1,000",1642.7],["1,500",1835.5]]
  .forEach(([s, x]) => out.push(text("mid", x, 953.3, s)));
out.push(text("title", 1246, 626.5, "2026"), text("title f", 1236, 960.5, "女"), text("title m", 1276, 960.5, "男"));
out.push(`<text class="mid" transform="translate(664.5 798) rotate(-90)">年齡</text>`);
out.push(`<g fill="none" stroke-width="2"><path d="M666,995q4 0 6-5 3-6 6-1 3-6 7-1 4 7 7 7H700" stroke="#ddd"/><path d="M646,995h8c5 0 7-11 13-11s8 11 13 11h9" stroke="#b5b5b5"/></g>`);
out.push(`<text class="note" x="1120" y="993.500" textLength="117" lengthAdjust="spacingAndGlyphs">* 預估資料參數取自國發會</text>`);
out.push(`<text class="note" x="1240" y="993.500" textLength="131" lengthAdjust="spacingAndGlyphs">- https://pop-proj.ndc.gov.tw/</text>`);
document.getElementById("charts").innerHTML = out.join("");
```
